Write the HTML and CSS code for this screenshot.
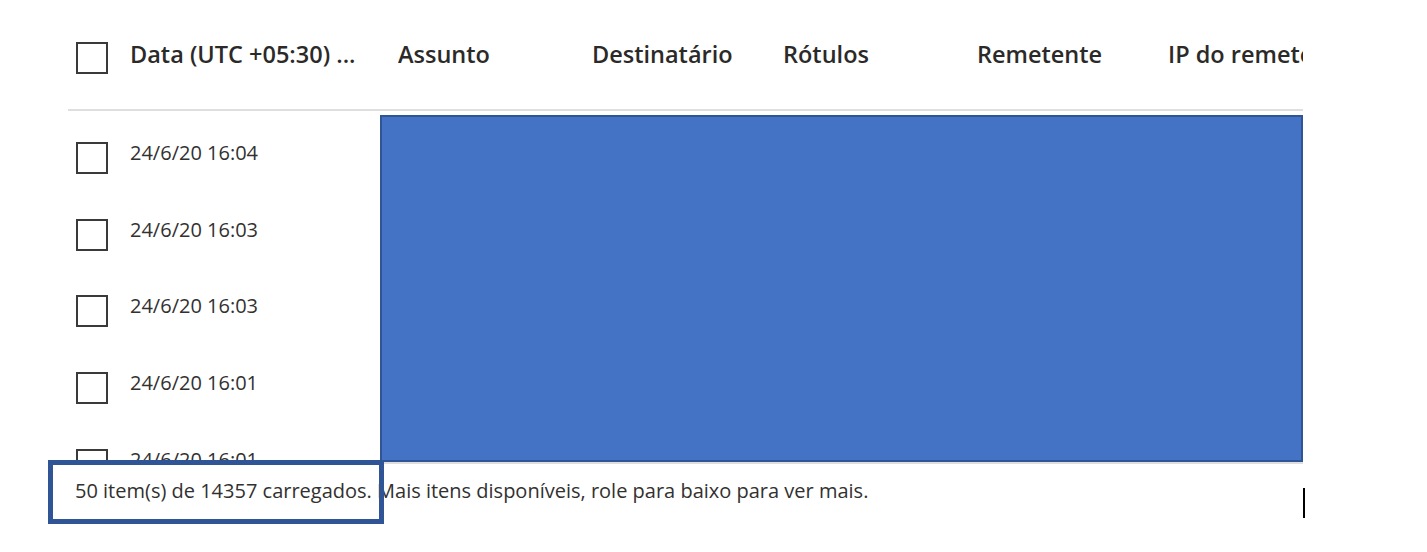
FILE: index.html
```html
<!DOCTYPE html>
<html lang="pt">
<head>
<meta charset="utf-8">
<title>Trace de mensagens</title>
<link rel="stylesheet" href="styles.css">
</head>
<body>
<div class="page">
  <div class="grid">
    <div class="head">
      <div class="cell cb-cell"><span class="cb"></span></div>
      <div class="cell">Data (UTC +05:30) ...</div>
      <div class="cell">Assunto</div>
      <div class="cell">Destinatário</div>
      <div class="cell">Rótulos</div>
      <div class="cell">Remetente</div>
      <div class="cell">IP do remetente</div>
    </div>
    <div class="rows">
      <div class="row">
        <div class="cell cb-cell"><span class="cb"></span></div>
        <div class="cell">24/6/20 16:04</div>
        <div class="cell link">Assunto</div>
        <div class="cell link">destinatario</div>
        <div class="cell"></div>
        <div class="cell">remetente</div>
        <div class="cell link">10.0.0.1</div>
      </div>
      <div class="row">
        <div class="cell cb-cell"><span class="cb"></span></div>
        <div class="cell">24/6/20 16:03</div>
        <div class="cell link">Assunto</div>
        <div class="cell link">destinatario</div>
        <div class="cell"></div>
        <div class="cell">remetente</div>
        <div class="cell link">10.0.0.1</div>
      </div>
      <div class="row">
        <div class="cell cb-cell"><span class="cb"></span></div>
        <div class="cell">24/6/20 16:03</div>
        <div class="cell link">Assunto</div>
        <div class="cell link">destinatario</div>
        <div class="cell"></div>
        <div class="cell">remetente</div>
        <div class="cell link">10.0.0.1</div>
      </div>
      <div class="row">
        <div class="cell cb-cell"><span class="cb"></span></div>
        <div class="cell">24/6/20 16:01</div>
        <div class="cell link">Assunto</div>
        <div class="cell link">destinatario</div>
        <div class="cell"></div>
        <div class="cell">remetente</div>
        <div class="cell link">10.0.0.1</div>
      </div>
      <div class="row">
        <div class="cell cb-cell"><span class="cb"></span></div>
        <div class="cell">24/6/20 16:01</div>
        <div class="cell link">Assunto</div>
        <div class="cell link">destinatario</div>
        <div class="cell"></div>
        <div class="cell">remetente</div>
        <div class="cell link">10.0.0.1</div>
      </div>
    </div>
    <div class="redact"></div>
  </div>
  <div class="footer">50 item(s) de 14357 carregados. Mais itens disponíveis, role para baixo para ver mais.</div>
  <div class="highlight"></div>
  <div class="caret"></div>
</div>
</body>
</html>
```
FILE: styles.css
```css
html, body {
  margin: 0;
  padding: 0;
  background: #ffffff;
}
body {
  font-family: "Open Sans", "Noto Sans", "Liberation Sans", sans-serif;
  color: #323130;
}
.page {
  position: relative;
  width: 1427px;
  height: 552px;
  overflow: hidden;
}
.grid {
  position: relative;
  margin-left: 68px;
  width: 1235px;
  overflow: hidden;
}
.head, .row {
  display: grid;
  grid-template-columns: 62px 268px 194px 191px 194px 191px 220px;
  white-space: nowrap;
}
.head {
  height: 109px;
  border-bottom: 2px solid #dedede;
  font-size: 23.5px;
  font-weight: 600;
  color: #2b2a29;
  align-items: start;
}
.head .cell {
  padding-top: 38px;
  line-height: 32px;
  overflow: hidden;
}
.head .cb-cell {
  padding-top: 42px;
}
.cb-cell {
  padding-left: 8px;
}
.cb {
  display: block;
  width: 28px;
  height: 28px;
  border: 2px solid #3b3a39;
}
.rows {
  height: 351px;
  overflow: hidden;
  border-bottom: 2px solid #dedede;
}
.row {
  height: 76.7px;
  font-size: 20px;
}
.row .cell {
  line-height: 26px;
  padding-top: 29px;
}
.row .cb-cell {
  padding-top: 31px;
}
.link {
  color: #0078d4;
}
.redact {
  position: absolute;
  left: 312px;
  top: 115px;
  width: 919px;
  height: 343px;
  background: #4472c4;
  border: 2px solid #2f5597;
}
.footer {
  padding-left: 75px;
  padding-top: 15px;
  font-size: 20px;
  line-height: 24px;
  color: #323130;
}
.highlight {
  position: absolute;
  left: 48px;
  top: 460px;
  width: 326px;
  height: 54px;
  border: 5px solid #2f5597;
}
.caret {
  position: absolute;
  left: 1303px;
  top: 488px;
  width: 2px;
  height: 30px;
  background: #000000;
}
```
